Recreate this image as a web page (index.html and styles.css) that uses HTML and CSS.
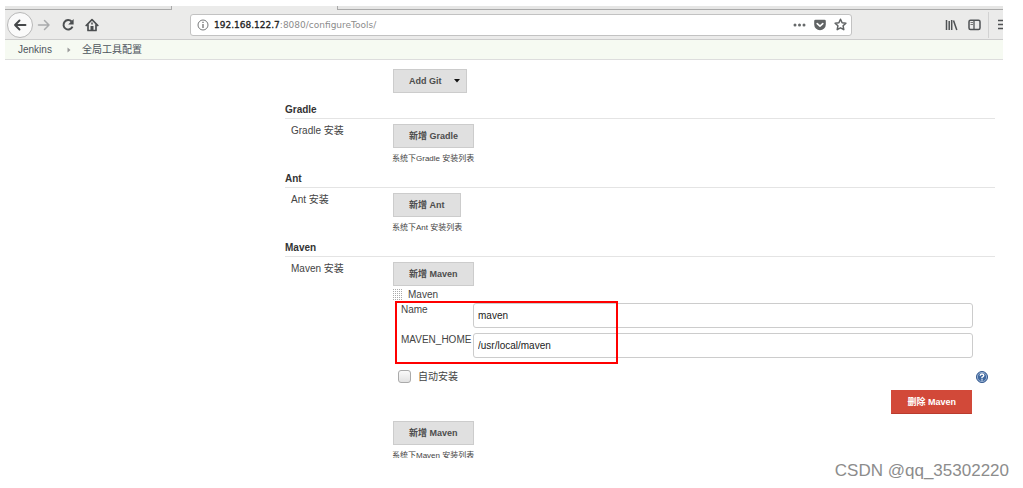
FILE: index.html
```html
<!DOCTYPE html>
<html lang="zh-CN">
<head>
<meta charset="utf-8">
<title>全局工具配置</title>
<link rel="stylesheet" href="styles.css">
</head>
<body>
<div class="window">
  <div class="tabs"><span class="tab-left"></span><span class="tab-active"></span><span class="tab-right"></span></div>
  <header class="toolbar">
    <button class="icon-btn back" aria-label="后退"><svg width="14" height="12" viewBox="0 0 14 12"><path d="M12.500 6H2M6.500 1.500L2 6l4.500 4.500" fill="none" stroke="#444749" stroke-width="1.900" stroke-linecap="round" stroke-linejoin="round"/></svg></button>
    <button class="icon-btn forward" aria-label="前进"><svg width="14" height="12" viewBox="0 0 14 12"><path d="M1.500 6H12M7.500 1.500L12 6l-4.500 4.500" fill="none" stroke="#a9abac" stroke-width="1.500" stroke-linecap="round" stroke-linejoin="round"/></svg></button>
    <button class="icon-btn reload" aria-label="刷新"><svg width="14" height="14" viewBox="0 0 14 14"><path d="M10.600 3.500A4.700 4.700 0 1 0 11.500 8.700" fill="none" stroke="#4b4e50" stroke-width="2"/><path d="M12.600 1v5.500H7.200z" fill="#4b4e50"/></svg></button>
    <button class="icon-btn home" aria-label="主页"><svg width="14" height="14" viewBox="0 0 14 14"><path d="M1.200 7.500L7 1.700l5.800 5.800M3 6.800v5.700h8V6.800" fill="none" stroke="#4b4e50" stroke-width="1.700" stroke-linejoin="round" stroke-linecap="round"/><path d="M5.500 12V8h3v4z" fill="#4b4e50"/><path d="M7 4.500v2" stroke="#4b4e50" stroke-width="1.500"/></svg></button>
    <div class="urlbar">
      <svg width="12" height="12" viewBox="0 0 12 12"><circle cx="6" cy="6" r="5" fill="none" stroke="#77797a"/><path d="M6 5v4M6 2.700v1.400" stroke="#666" stroke-width="1.200"/></svg>
      <div class="url"><b>192.168.122.7</b>:8080/configureTools/</div>
      <button class="icon-btn" aria-label="更多"><svg width="13" height="4" viewBox="0 0 13 4"><g fill="#66696a"><circle cx="2" cy="2" r="1.500"/><circle cx="6.500" cy="2" r="1.500"/><circle cx="11" cy="2" r="1.500"/></g></svg></button>
      <button class="icon-btn" aria-label="Pocket"><svg width="12" height="12" viewBox="0 0 12 12"><path d="M1.500.8h9q1.300 0 1.300 1.300v3.400a5.800 5.800 0 0 1-11.600 0V2.100Q.2.800 1.500.8z" fill="#606364"/><path d="M3.200 4.600L6 7.200l2.800-2.600" fill="none" stroke="#fff" stroke-width="1.600" stroke-linecap="round" stroke-linejoin="round"/></svg></button>
      <button class="icon-btn" aria-label="收藏"><svg width="13" height="13" viewBox="0 0 13 13"><path d="M6.500 1.200l1.600 3.500 3.800.5-2.800 2.600.7 3.900-3.300-1.900-3.300 1.900.7-3.900L1.100 5.200l3.800-.5z" fill="none" stroke="#606364" stroke-width="1.500" stroke-linejoin="round"/></svg></button>
    </div>
    <div class="tools">
      <button class="icon-btn" aria-label="书库"><svg width="13" height="12" viewBox="0 0 13 12"><path d="M1.500 1v10M4.200 2v9M6.700 1v10M8.500 1.500l3.300 9.500" stroke="#4f5254" stroke-width="1.500"/></svg></button>
      <button class="icon-btn" aria-label="侧栏"><svg width="13" height="12" viewBox="0 0 13 12"><rect x="1" y="1.200" width="11" height="9.300" rx="1.500" fill="none" stroke="#4f5254" stroke-width="1.500"/><path d="M6 1v9.500" stroke="#4f5254" stroke-width="1.300"/><path d="M2.500 3.500H5M2.500 5.500H5" stroke="#777"/></svg></button>
    </div>
    <button class="icon-btn menu" aria-label="菜单"><svg width="5" height="11" viewBox="0 0 5 11"><path d="M0 1.500h5M0 5.500h5M0 9.500h5" stroke="#4f5254" stroke-width="1.500"/></svg></button>
  </header>
  <nav class="breadcrumb">
    <a href="#">Jenkins</a>
    <svg width="4" height="6" viewBox="0 0 4 6"><path d="M.5.500L3.500 3l-3 2.500z" fill="#999"/></svg>
    <a href="#">全局工具配置</a>
  </nav>
  <main class="config">
    <div class="row first"><div class="body"><button class="btn split">Add Git<svg width="6" height="4" viewBox="0 0 6 4"><path d="M0 0h6L3 3.500z" fill="#111"/></svg></button></div></div>
    <section class="section">
      <h2>Gradle</h2>
      <div class="row"><div class="label">Gradle 安装</div><div class="body"><button class="btn">新增 Gradle</button><p class="hint">系统下Gradle 安装列表</p></div></div>
    </section>
    <section class="section">
      <h2>Ant</h2>
      <div class="row"><div class="label">Ant 安装</div><div class="body"><button class="btn">新增 Ant</button><p class="hint">系统下Ant 安装列表</p></div></div>
    </section>
    <section class="section">
      <h2>Maven</h2>
      <div class="row">
        <div class="label">Maven 安装</div>
        <div class="body">
          <button class="btn">新增 Maven</button>
          <div class="item-title"><span class="grip"></span>Maven</div>
          <div class="fields">
            <label for="name">Name</label><input id="name" class="text" type="text" value="maven">
            <label for="home">MAVEN_HOME</label><input id="home" class="text" type="text" value="/usr/local/maven">
            <div class="highlight"></div>
          </div>
          <div class="auto">
            <input id="auto" class="check" type="checkbox"><label for="auto">自动安装</label>
            <button class="icon-btn help" aria-label="帮助"><svg width="12" height="12" viewBox="0 0 12 12"><circle cx="6" cy="6" r="5.500" fill="#3f689f" stroke="#34598f"/><circle cx="6" cy="6" r="4.600" fill="none" stroke="#a9bfdc" stroke-width=".8"/><path d="M4.200 4.700Q4.300 3 6 3t1.800 1.500Q7.800 5.500 6 6.300v1M6 8.200v1.300" fill="none" stroke="#fff" stroke-width="1.400"/></svg></button>
          </div>
          <div class="actions"><button class="btn danger">删除 Maven</button></div>
          <button class="btn">新增 Maven</button>
          <p class="hint">系统下Maven 安装列表</p>
        </div>
      </div>
    </section>
  </main>
</div>
<footer class="watermark">CSDN @qq_35302220</footer>
</body>
</html>
```
FILE: styles.css
```css
* { box-sizing: border-box; }
body {
  margin: 0;
  height: 100vh;
  display: flex;
  flex-direction: column;
  background: #fff;
  color: #444;
  font: 10px/14px "Liberation Sans", "Noto Sans CJK SC", sans-serif;
}
button, input { font: inherit; margin: 0; }
.window {
  flex: 1;
  min-height: 0;
  margin: 6px 20px 0 5px;
  overflow: hidden;
  display: flex;
  flex-direction: column;
}
.tabs { flex: none; display: flex; height: 4px; background: #e6e6e5; }
.tab-left { width: 167px; border: solid #aaa; border-width: 0 1px 1px 0; }
.tab-active { width: 165px; background: #ebebea; }
.tab-right { flex: 1; border: solid #aaa; border-width: 0 0 1px 1px; }
.toolbar {
  flex: none;
  display: flex;
  align-items: center;
  height: 30px;
  padding-left: 2px;
  background: #ebebea;
  border-bottom: 1px solid #ccc;
}
.icon-btn {
  display: flex;
  align-items: center;
  justify-content: center;
  flex: none;
  padding: 0;
  border: 0;
  background: none;
}
.back { width: 26px; height: 26px; border: 1px solid #b8b8b8; border-radius: 50%; background: #fafafa; }
.forward { margin-left: 4px; }
.reload { margin-left: 10px; }
.home { margin-left: 10px; }
.urlbar {
  flex: 1;
  display: flex;
  align-items: center;
  gap: 8px;
  height: 22px;
  margin-left: 91px;
  padding: 0 4px 0 6px;
  background: #fff;
  border: 1px solid #c2c2c2;
  border-radius: 3px;
}
.url { flex: 1; margin-left: -3px; color: #8c8c8c; font: 9px/14px "DejaVu Sans", sans-serif; }
.url b { color: #222; font-weight: 400; -webkit-text-stroke: 0.3px #222; }
.tools { display: flex; gap: 10px; margin-left: 93px; }
.menu { height: 26px; margin-left: 7px; padding-left: 9px; border-left: 1px solid #d2d2d2; }
.breadcrumb {
  flex: none;
  display: flex;
  align-items: center;
  height: 20px;
  padding-left: 13px;
  background: #f6faf2;
  border-bottom: 1px solid #ddd;
}
.breadcrumb a { color: #4d545d; text-decoration: none; }
.breadcrumb svg { margin: 0 11px 0 15px; }
.config { flex: 1; min-height: 0; padding: 9px 8px 0 280px; }
.row { display: grid; grid-template-columns: 107px 1fr; }
.first { padding-bottom: 9px; }
.first .body { grid-column: 2; }
.section { padding-bottom: 5px; }
.section h2 {
  margin: 0 0 5px;
  height: 17px;
  border-bottom: 1px solid #e4e4e4;
  color: #333;
  font-size: 10px;
  line-height: 16px;
}
.label { padding-left: 6px; }
.btn {
  display: block;
  height: 24px;
  margin-left: 1px;
  padding: 0 15px;
  border: 1px solid #ccc;
  background: #e0e0e0;
  color: #4d4d4d;
  font-size: 9px;
  font-weight: 700;
}
.split { display: flex; align-items: center; gap: 12px; padding-right: 6px; }
.hint { margin: 4px 0 0; font-size: 8px; line-height: 14px; }
.item-title { display: flex; align-items: center; gap: 6px; height: 17px; padding-left: 1px; }
.grip {
  width: 9px;
  height: 11px;
  background:
    repeating-linear-gradient(90deg, transparent 0 1px, #fff 1px 2px),
    repeating-linear-gradient(#aaa 0 1px, #fff 1px 2px);
}
.fields {
  position: relative;
  display: grid;
  grid-template-columns: 72px 1fr;
  row-gap: 5px;
  padding: 0 22px 0 9px;
}
.text {
  width: 100%;
  min-width: 0;
  height: 25px;
  padding: 0 4px;
  border: 1px solid #ccc;
  border-radius: 3px;
  background: #fff;
  color: #222;
}
.highlight {
  position: absolute;
  left: 3px;
  top: -2px;
  width: 223px;
  height: 63px;
  border: 2px solid #f00;
}
.auto { display: flex; align-items: center; height: 25px; margin-top: 6px; padding: 0 7px 0 6px; }
.check {
  appearance: none;
  width: 13px;
  height: 13px;
  margin-right: 7px;
  border: 1px solid #aaa;
  border-radius: 3px;
  background: linear-gradient(#fafafa, #e2e2e2);
}
.help { margin-left: auto; }
.actions { display: flex; justify-content: flex-end; padding: 1px 23px 7px 0; }
.danger { border-color: #d24939 #d24939 #b93b2d; background: #d24939; color: #fff; }
.watermark {
  flex: none;
  height: 30px;
  padding-right: 14px;
  color: #8c8c8c;
  font: 17px/25px "Liberation Sans", sans-serif;
  text-align: right;
}
```
